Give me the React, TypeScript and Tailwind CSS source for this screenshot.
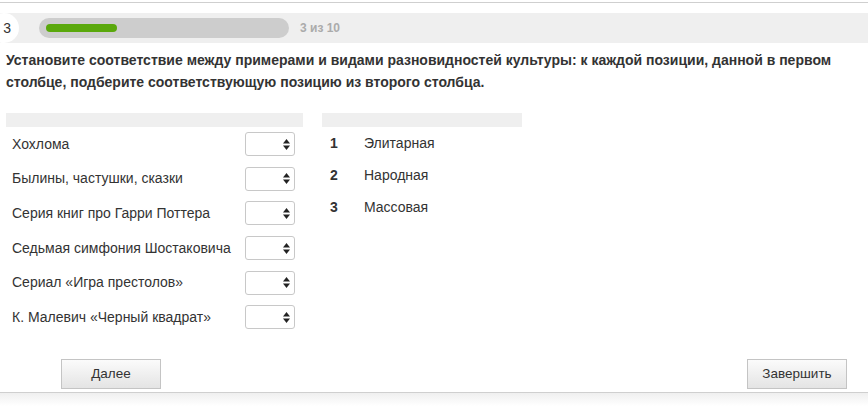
const examples = [
  "Хохлома",
  "Былины, частушки, сказки",
  "Серия книг про Гарри Поттера",
  "Седьмая симфония Шостаковича",
  "Сериал «Игра престолов»",
  "К. Малевич «Черный квадрат»",
];

const kinds = ["Элитарная", "Народная", "Массовая"];

function SelectBox() {
  return (
    <div className="w-[50px] h-[24px] rounded-[3px] border border-[#c8c8c8] bg-white flex items-center justify-end pr-[4px]">
      <svg width="7" height="11" viewBox="0 0 7 11" className="fill-[#222]">
        <path d="M3.5 0 L7 4.5 L0 4.5 Z" />
        <path d="M0 6.5 L7 6.5 L3.5 11 Z" />
      </svg>
    </div>
  );
}

export default function App() {
  return (
    <div className="w-[868px] h-[406px] bg-white overflow-hidden text-[#333] font-['Liberation_Sans',Arial,sans-serif] flex flex-col">
      {/* top rule */}
      <div className="h-[3px] border-b border-[#cfcfcf]" />

      {/* progress bar */}
      <div className="mt-[10px] h-[30px] bg-[#efefef] flex items-center">
        <div className="-ml-[11px] w-[30px] h-[30px] rounded-full bg-white flex items-center justify-end pr-[8px] text-[14px]">
          3
        </div>
        <div className="ml-[20px] w-[250px] h-[20px] rounded-full bg-[#cdcdcd] flex items-center px-[7px]">
          <div className="w-[71px] h-[8px] rounded-full bg-[#5aa80c]" />
        </div>
        <span className="ml-[11px] text-[12px] font-bold text-[#ababab]">3 из 10</span>
      </div>

      {/* question */}
      <p className="mt-[6px] pl-[6px] pr-[30px] text-[14px] leading-[22px] font-bold">
        Установите соответствие между примерами и видами разновидностей культуры: к каждой позиции, данной в первом
        столбце, подберите соответствующую позицию из второго столбца.
      </p>

      {/* tables */}
      <div className="mt-[20px] flex items-start">
        <div className="ml-[6px] w-[297px]">
          <div className="h-[14px] bg-[#efefef]" />
          {examples.map((label) => (
            <div key={label} className="h-[34.6px] flex items-center justify-between pl-[6px] pr-[8px] text-[14px]">
              <span>{label}</span>
              <SelectBox />
            </div>
          ))}
        </div>
        <div className="ml-[19px] w-[200px]">
          <div className="h-[14px] bg-[#efefef]" />
          {kinds.map((kind, i) => (
            <div key={kind} className="h-[32px] flex items-center text-[14px]">
              <span className="w-[42px] pl-[8px] font-bold">{i + 1}</span>
              <span>{kind}</span>
            </div>
          ))}
        </div>
      </div>

      {/* buttons */}
      <div className="mt-auto mb-[3px] flex items-center justify-between pl-[61px] pr-[21px]">
        <button className="w-[100px] h-[30px] border border-[#c4c4c4] bg-gradient-to-b from-[#fbfbfb] to-[#e4e4e4] text-[13.5px] text-[#333]">
          Далее
        </button>
        <button className="w-[100px] h-[30px] border border-[#c4c4c4] bg-gradient-to-b from-[#fbfbfb] to-[#e4e4e4] text-[13.5px] text-[#333]">
          Завершить
        </button>
      </div>

      {/* bottom rule */}
      <div className="h-[14px] border-t border-[#cfcfcf] bg-gradient-to-b from-[#efefef] to-white" />
    </div>
  );
}
